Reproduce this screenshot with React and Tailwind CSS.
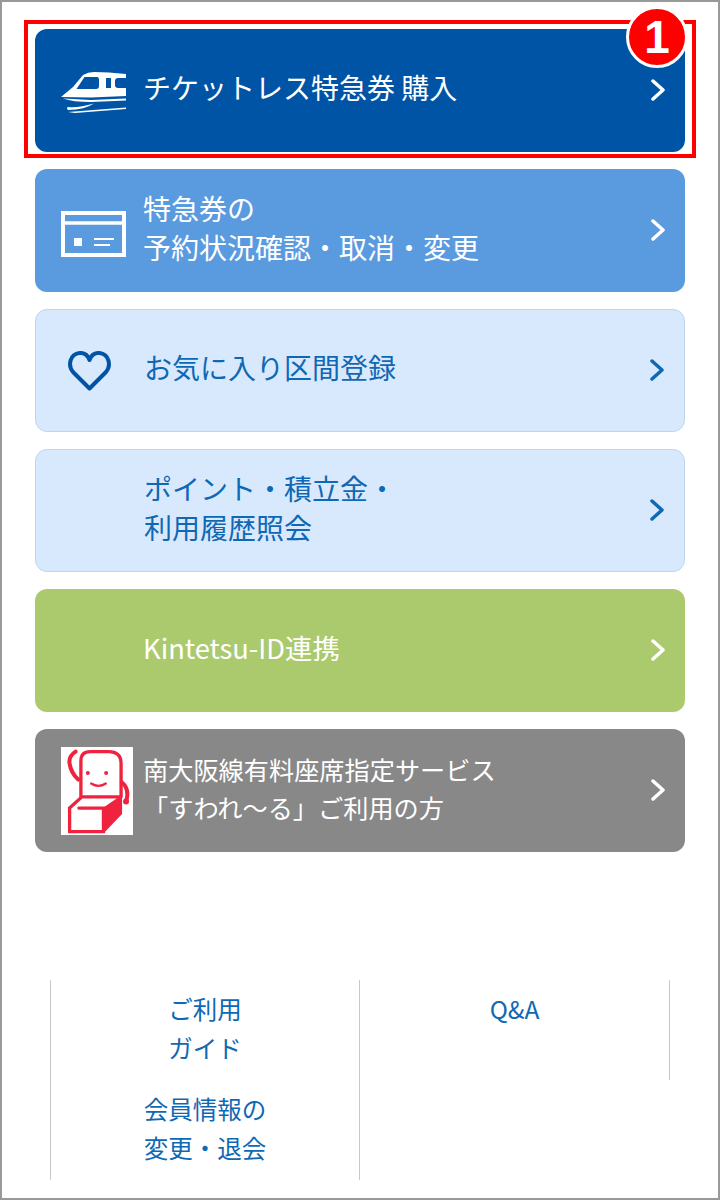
import React from 'react';

const TrainIcon = () => (
  <svg width="65" height="44" viewBox="0 0 65 44" fill="none" className="mt-[5px]">
    <path d="M0 26 L12 16 L22 4 Q27 1 33 1 L48 1.500 L65 3 V25 L30 26.500 Z" fill="#fff" />
    <path d="M23.500 6 H36 Q38 6 38 9 V15 Q38 18 35 18 H15.500 Z" fill="#0054a5" />
    <path d="M45 7 H50 V17 H45 Z" fill="#0054a5" />
    <path d="M65 7 H57 Q54 7 54 10 V14 Q54 17 57 17 H65 Z" fill="#0054a5" />
    <path d="M2 27.500 L30 29 L65 27.500 V29.500 L30 31 Q12 31 2 27.500 Z" fill="#fff" />
    <path d="M7 36 Q18 37 33 32.500 Q24 38.500 7 39 Q5 37 7 36 Z" fill="#fff" />
    <path d="M7 41 L65 36.500 V38 L14 42 Z" fill="#fff" />
  </svg>
);

const CardIcon = () => (
  <svg width="65" height="46" viewBox="0 0 65 46" fill="none" className="mt-[7px]">
    <rect x="2" y="2" width="61" height="42" stroke="#fff" strokeWidth="4" />
    <path d="M2 12 H63" stroke="#fff" strokeWidth="3.500" />
    <path d="M13 27 H21 V35 H13 Z M33 27 H53 V29 H33 Z M33 33 H49 V35 H33 Z" fill="#fff" />
  </svg>
);

const HeartIcon = () => (
  <svg width="43" height="40" viewBox="0 0 43 40" fill="none">
    <path
      d="M21.500 37.500 L5 21 C-0.500 14.500 2 3 11.500 2 C16 1.700 19.800 4 21.500 9 C23.200 4 27 1.700 31.500 2 C41 3 43.500 14.500 38 21 Z"
      stroke="#0054a5"
      strokeWidth="4"
      strokeLinejoin="round"
    />
  </svg>
);

const MascotIcon = () => (
  <svg width="72" height="88" viewBox="63 50 215 265" className="bg-white">
    <g fill="none" stroke="#f0233f" strokeWidth="10" strokeLinecap="round">
      <path d="M122 200 V92 Q122 64 150 64 H205 Q243 64 243 100 V200" />
      <path d="M106 64 Q84 78 88 100 Q92 128 114 148" strokeWidth="12" />
      <path d="M245 156 Q270 176 258 214" strokeWidth="12" />
      <path d="M153 160 Q175 174 197 160" strokeWidth="7" />
      <path d="M88 305 V234 L125 200 H240" />
      <path d="M88 305 H190 V234 H116" />
    </g>
    <path d="M190 232 L246 194 V252 L192 308 Z" fill="#f0233f" />
    <circle cx="258" cy="214" r="9" fill="#f0233f" />
    <circle cx="143" cy="128" r="6" fill="#f0233f" />
    <circle cx="198" cy="128" r="6" fill="#f0233f" />
  </svg>
);

const Chevron = ({ color }) => (
  <svg width="14" height="22" viewBox="0 0 14 22" fill="none" className="mr-[20px] mb-[2px] shrink-0">
    <path d="M2 2 L12 11 L2 20" stroke={color} strokeWidth="3.500" strokeLinecap="round" strokeLinejoin="round" />
  </svg>
);

const menuItems = [
  { lines: ['チケットレス特急券 購入'], box: 'bg-[#0054a5] text-white', chevron: '#fff', icon: <TrainIcon />, iconClass: 'pl-[26px]', textClass: 'text-[28px] leading-[39px]' },
  { lines: ['特急券の', '予約状況確認・取消・変更'], box: 'bg-[#5a9be0] text-white', chevron: '#fff', icon: <CardIcon />, iconClass: 'pl-[26px]', textClass: 'text-[28px] leading-[39px]' },
  { lines: ['お気に入り区間登録'], box: 'bg-[#d9e9fd] border border-[#bcd6f2] text-[#0f68b4]', chevron: '#0f68b4', icon: <HeartIcon />, iconClass: 'pl-[32px]', textClass: 'text-[28px] leading-[39px]' },
  { lines: ['ポイント・積立金・', '利用履歴照会'], box: 'bg-[#d9e9fd] border border-[#bcd6f2] text-[#0f68b4]', chevron: '#0f68b4', icon: null, iconClass: '', textClass: 'text-[28px] leading-[39px]' },
  { lines: ['Kintetsu-ID連携'], box: 'bg-[#abca6e] text-white', chevron: '#fff', icon: null, iconClass: '', textClass: 'text-[27.300px] leading-[39px]' },
  { lines: ['南大阪線有料座席指定サービス', '「すわれ〜る」ご利用の方'], box: 'bg-[#888888] text-white', chevron: '#fff', icon: <MascotIcon />, iconClass: 'pl-[26px]', textClass: 'text-[25.200px] leading-[38px]' },
];

function MenuButton({ item }) {
  return (
    <div className={`h-[123px] rounded-[12px] flex items-center ${item.box}`}>
      <div className={`w-[108px] shrink-0 flex items-center ${item.iconClass}`}>{item.icon}</div>
      <div className={`flex-1 pb-[6px] ${item.textClass}`}>
        {item.lines.map(line => (
          <p key={line}>{line}</p>
        ))}
      </div>
      <Chevron color={item.chevron} />
    </div>
  );
}

export default function App() {
  return (
    <div className="relative w-[720px] h-[1200px] bg-white border-2 border-[#999999] font-['Noto_Sans_CJK_JP','Noto_Sans',sans-serif]">
      <div className="px-[33px] pt-[27px] flex flex-col gap-[17px]">
        {menuItems.map(item => (
          <MenuButton key={item.lines[0]} item={item} />
        ))}
      </div>

      {/* Footer links */}
      <div className="mt-[128px] ml-[48px] w-[620px] grid grid-cols-2 text-[24.500px] leading-[39px] text-[#0f68b4] text-center">
        <div className="h-[100px] pt-[9px] border-l border-r border-[#c8c8c8]">
          <p>ご利用</p>
          <p>ガイド</p>
        </div>
        <div className="h-[100px] pt-[9px] border-r border-[#c8c8c8]">
          <p>Q&amp;A</p>
        </div>
        <div className="h-[100px] pt-[9px] border-l border-r border-[#c8c8c8]">
          <p>会員情報の</p>
          <p>変更・退会</p>
        </div>
      </div>

      {/* Annotation over the first button */}
      <div className="absolute left-[22px] top-[18px] w-[672px] h-[138px] border-4 border-[#ff0000]" />
      <div className="absolute left-[624px] top-[4px] w-[62px] h-[62px] rounded-full bg-[#ff0000] border-[3px] border-white flex items-center justify-center text-white text-[46px] font-bold leading-none font-['Liberation_Sans',sans-serif]">
        1
      </div>
    </div>
  );
}
